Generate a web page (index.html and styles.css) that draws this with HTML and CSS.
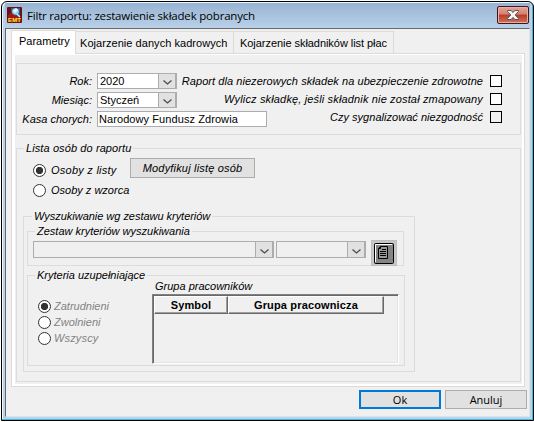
FILE: index.html
```html
<!DOCTYPE html>
<html lang="pl">
<head>
<meta charset="utf-8">
<title>Filtr raportu</title>
<link rel="stylesheet" href="styles.css">
</head>
<body>
<div class="window">
  <header class="titlebar">
    <svg class="app-icon" width="15" height="16" viewBox="0 0 15 16">
      <rect width="15" height="16" rx="1" fill="#681216"/>
      <path d="M1 8 5 5l2 3 3-1 4 5v3H1z" fill="#a3161a"/>
      <path d="M4 1h9v9L9 9 4 5z" fill="#315f87"/>
      <circle cx="8.500" cy="4.500" r="3.300" fill="#9ed2ed"/>
      <path d="M6 4 9 1l2 2-3 3z" fill="#e7f7ff"/>
      <path d="M10 7l3 3" stroke="#d4e4ee" stroke-width="1.500"/>
      <text x="1" y="14.500" class="icon-text" textLength="13">EMT</text>
    </svg>
    <h1 class="title">Filtr raportu: zestawienie składek pobranych</h1>
    <button class="close"><svg width="12" height="10" viewBox="0 0 12 10"><path d="M.5.5h3.700L6 2.600 7.800.5h3.700v1L8.200 5l3.300 3.500v1H7.800L6 7.400 4.200 9.500H.5v-1L3.800 5 .5 1.500z" fill="#f4f4f4" stroke="#56545f"/></svg></button>
  </header>
  <main class="client">
    <nav class="tabs">
      <span class="tab active"><span class="t-param">Parametry</span></span>
      <span class="tab second"><span class="t-kadr">Kojarzenie danych kadrowych</span></span>
      <span class="tab third"><span class="t-plac">Kojarzenie składników list płac</span></span>
    </nav>
    <section class="page">
      <div class="group options">
        <div class="fields">
          <label class="name">Rok:</label><div class="combo"><span>2020</span><i class="arrow"><svg width="9" height="5"><path d="M.5.5 4.500 4 8.500.5"/></svg></i></div>
          <label class="name">Miesiąc:</label><div class="combo"><span>Styczeń</span><i class="arrow"><svg width="9" height="5"><path d="M.5.5 4.500 4 8.500.5"/></svg></i></div>
          <label class="name">Kasa chorych:</label><div class="input"><span class="t-fund">Narodowy Fundusz Zdrowia</span></div>
        </div>
        <div class="checks">
          <label class="check"><span class="t-c1">Raport dla niezerowych składek na ubezpieczenie zdrowotne</span><i class="box"></i></label>
          <label class="check"><span class="t-c2">Wylicz składkę, jeśli składnik nie został zmapowany</span><i class="box"></i></label>
          <label class="check"><span class="t-c3">Czy sygnalizować niezgodność</span><i class="box off"></i></label>
        </div>
      </div>
      <div class="group people">
        <div class="legend"><span class="t-l1">Lista osób do raportu</span></div>
        <div class="people-row">
          <div class="radios">
            <label class="radio on"><i></i><span class="t-r1">Osoby z listy</span></label>
            <label class="radio"><i></i><span>Osoby z wzorca</span></label>
          </div>
          <button class="btn modify"><span class="t-mod">Modyfikuj listę osób</span></button>
        </div>
        <div class="group search">
          <div class="legend"><span class="t-l2">Wyszukiwanie wg zestawu kryteriów</span></div>
          <div class="group sets">
            <div class="legend"><span>Zestaw kryteriów wyszukiwania</span></div>
            <div class="set-row">
              <div class="combo empty wide"><i class="arrow"><svg width="9" height="5"><path d="M.5.5 4.500 4 8.500.5"/></svg></i></div>
              <div class="combo empty narrow"><i class="arrow"><svg width="9" height="5"><path d="M.5.5 4.500 4 8.500.5"/></svg></i></div>
              <button class="doc"><svg width="20" height="21" viewBox="0 0 20 21"><rect x=".5" y=".5" width="19" height="20" rx="1" fill="#848484" stroke="#000"/><path d="M1.500 19V1.500H18" fill="none" stroke="#fff"/><path d="M6.500 3.500h7v12h-9v-10zM4.500 5.500h2v-2" fill="#999" stroke="#000"/><path d="M8 6.500h4M6 8.500h6M6 10.500h6M6 12.500h6" stroke="#000"/></svg></button>
            </div>
          </div>
          <div class="group extra">
            <div class="legend"><span>Kryteria uzupełniające</span></div>
            <div class="extra-row">
              <div class="radios status">
                <label class="radio on"><i></i><span>Zatrudnieni</span></label>
                <label class="radio"><i></i><span>Zwolnieni</span></label>
                <label class="radio"><i></i><span class="t-s3">Wszyscy</span></label>
              </div>
              <div class="workers">
                <div class="caption"><span>Grupa pracowników</span></div>
                <div class="table">
                  <div class="th sym"><span>Symbol</span></div>
                  <div class="th grp"><span>Grupa pracownicza</span></div>
                </div>
              </div>
            </div>
          </div>
        </div>
      </div>
    </section>
    <footer class="actions">
      <button class="btn ok">Ok</button>
      <button class="btn cancel">Anuluj</button>
    </footer>
  </main>
</div>
</body>
</html>
```
FILE: styles.css
```css
* { box-sizing: border-box; }
body { margin: 0; background: #fff; font: 11px/14px "Liberation Sans", Arial, sans-serif; color: #000; }
span { white-space: nowrap; }
svg { display: block; flex: none; }
button { font: inherit; color: inherit; padding: 0; margin: 0; }
label, .caption, .legend, .modify { font-style: italic; }

.window { width: 533px; height: 420px; margin: 1px 0 0 1px; border: 1px solid #000; border-radius: 6px 6px 0 0; background: #b9d1e9; box-shadow: inset -1px -1px #35bfe3, inset 1px 1px #eef6ff; padding: 1px 3px 3px; }
.titlebar { display: flex; align-items: center; height: 25px; padding: 0 1px 2px 2px; background: linear-gradient(#98b3d2, #b9d1e9); }
.app-icon { margin-top: 1px; }
.icon-text { font: bold 6px "Liberation Sans", Arial, sans-serif; fill: #ffee20; }
.title { margin: 2px 0 0 5px; flex: 1; font: 11.5px/18px "Open Sans", "Noto Sans", sans-serif; white-space: nowrap; letter-spacing: -.2px; }
.close { display: flex; align-items: center; justify-content: center; width: 32px; height: 18px; margin-top: 1px; border: 1px solid #43151d; border-radius: 2px; background: linear-gradient(#e4a498, #d3806f 45%, #b93b23 50%, #cf725f); box-shadow: inset 0 0 0 1px #e8afa3; }
.client { height: 389px; border: 1px solid; border-color: #696969 #e3e3e3 #e3e3e3 #696969; background: #f0f0f0; padding: 1px 4px 0 5px; }

.tabs { display: flex; align-items: flex-end; height: 23px; }
.tab { display: flex; align-items: center; height: 22px; border: 1px solid #dcdcdc; border-width: 1px 1px 0 0; }
.tab.active { width: 65px; height: 24px; margin-bottom: -1px; padding: 0 0 3px 7px; border-left-width: 1px; background: #fff; z-index: 1; }
.second { width: 158px; padding-left: 4px; }
.third { width: 160px; padding-left: 6px; }
.t-kadr { letter-spacing: .05px; }
.t-plac { letter-spacing: -.05px; }
.page { height: 334px; width: 514px; border: 1px solid #dcdcdc; background: #f0f0f0; box-shadow: inset 3px 1px #fff, inset -2px -2px #fff; padding: 9px 3px 0 4px; }

.group { border: 1px solid #dcdcdc; }
.legend { width: max-content; height: 16px; line-height: 16px; margin-top: -9px; padding: 0 2px; background: #f0f0f0; }
.options { display: flex; justify-content: space-between; height: 72px; width: 505px; }
.fields { display: grid; grid-template-columns: 75px 170px; grid-auto-rows: 16px; row-gap: 3px; column-gap: 5px; padding-top: 9px; }
.name { text-align: right; line-height: 16px; white-space: nowrap; }
.combo, .input { height: 16px; border: 1px solid #abadb3; background: #fff; display: flex; align-items: center; padding-left: 2px; }
.combo { width: 80px; justify-content: space-between; }
.input { padding-left: 1px; }
.t-fund { letter-spacing: .08px; }
.arrow { width: 18px; height: 100%; margin-left: auto; display: flex; align-items: center; justify-content: center; padding-top: 3px; background: #e1e1e1; border: 1px solid #adadad; border-width: 0 1px 0 1px; }
.arrow path { fill: none; stroke: #4b4b4b; stroke-width: 1.300; }
.checks { margin-left: -100px; padding: 8px 18px 0 0; }
.check { display: flex; justify-content: flex-end; align-items: center; height: 18px; gap: 7px; }
.t-c1 { letter-spacing: .06px; }
.t-c2 { letter-spacing: .15px; }
.t-c3 { letter-spacing: .03px; }
.box { width: 12px; height: 12px; border: 1px solid #000; background: #fff; }
.box.off { background: #f0f0f0; }

.people { height: 234px; width: 505px; margin-top: 13px; padding-left: 6px; }
.people > .legend { margin-left: 1px; }
.t-l1 { letter-spacing: .1px; }
.t-l2 { letter-spacing: -.03px; }
.people-row { display: flex; padding-left: 10px; height: 60px; }
.radios { padding-top: 4px; width: 97px; }
.radio { display: flex; align-items: center; height: 20px; gap: 5px; }
.t-r1 { letter-spacing: .25px; }
.radio i { flex: none; width: 13px; height: 13px; border: 1px solid #333; border-radius: 50%; background: #fff; }
.radio.on i { background: radial-gradient(circle, #333 3.300px, #fff 4px); }
.btn { border: 1px solid #adadad; background: #e1e1e1; line-height: 14px; }
.modify { width: 125px; height: 20px; margin-top: 2px; letter-spacing: .18px; }
.search { width: 392px; height: 156px; padding-left: 3px; }
.search > .legend { margin-left: 5px; }
.sets { width: 377px; height: 35px; margin-top: 7px; padding-left: 5px; }
.sets .legend { margin-left: 2px; }
.set-row { display: flex; margin-top: 2px; }
.empty { height: 17px; background: #f0f0f0; }
.wide { width: 241px; margin-right: 2px; }
.narrow { width: 90px; margin-right: 5px; }
.doc { display: flex; align-items: center; justify-content: center; flex: none; width: 26px; height: 26px; margin-top: -1px; border: 1px solid #bdbdbd; background: #c8c8c8; }
.extra { width: 378px; height: 91px; margin-top: 9px; }
.extra .legend { margin-left: 7px; }
.extra-row { display: flex; padding-left: 10px; }
.status { width: 114px; padding-top: 15px; color: #838383; }
.status .radio { height: 16px; gap: 3px; }
.t-s3 { letter-spacing: .15px; }
.caption { height: 12px; line-height: 12px; margin: -3px 0 2px 3px; }
.table { display: flex; width: 247px; height: 70px; padding: 1px 0 0 1px; border: 1px solid; border-color: #808080 #fff #fff #808080; box-shadow: inset 1px 1px #696969, inset -1px -1px #e3e3e3; }
.th { height: 18px; border: 1px solid; border-color: #fff #696969 #696969 #fff; box-shadow: inset -1px -1px #a0a0a0; text-align: center; line-height: 17px; font-weight: bold; letter-spacing: .15px; }
.sym { width: 74px; }
.grp { width: 156px; }
.actions { display: flex; justify-content: flex-end; gap: 4px; padding-top: 3px; margin-right: -2px; }
.ok, .cancel { width: 82px; height: 19px; font: 11px/15px "Open Sans", "Noto Sans", sans-serif; }
.ok { border: 2px solid #0078d7; }
```
